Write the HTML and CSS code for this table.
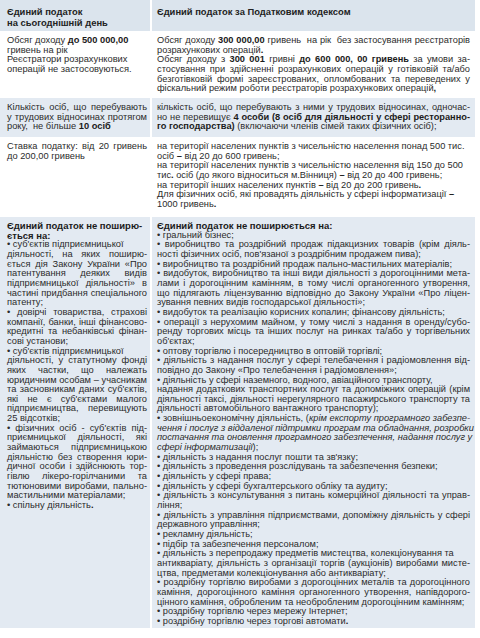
FILE: index.html
```html
<!DOCTYPE html>
<html lang="uk">
<head>
<meta charset="utf-8">
<title>Єдиний податок</title>
<link rel="stylesheet" href="styles.css">
</head>
<body>
<div class="table">
  <div class="cell head left">Єдиний податок<br>на сьогоднішній день</div>
  <div class="cell head right">Єдиний податок за Податковим кодексом</div>

  <div class="cell left">
    <span class="ln">Обсяг доходу <b>до 500 000,00</b></span>
    <span class="ln">гривень на рік</span>
    <span class="ln">Реєстратори розрахункових</span>
    <span class="ln">операцій не застосовуються.</span>
  </div>
  <div class="cell right">
    <span class="ln j">Обсяг доходу <b>300 000,00</b> гривень&nbsp; на рік&nbsp; без застосування реєстраторів</span>
    <span class="ln">розрахункових операцій<b>.</b></span>
    <span class="ln j">Обсяг доходу з <b>300 001</b> гривні <b>до 600 000, 00 гривень</b> за умови за-</span>
    <span class="ln j">стосування при здійсненні розрахункових операцій у готівковій та/або</span>
    <span class="ln j">безготівковій формі зареєстрованих, опломбованих та переведених у</span>
    <span class="ln">фіскальний режим роботи реєстраторів розрахункових операцій<b>,</b></span>
  </div>

  <div class="cell left band">
    <span class="ln j">Кількість осіб, що перебувають</span>
    <span class="ln j">у трудових відносинах протягом</span>
    <span class="ln">року,&nbsp; не більше <b>10 осіб</b></span>
  </div>
  <div class="cell right band">
    <span class="ln j">кількість осіб, що перебувають з ними у трудових відносинах, одночас-</span>
    <span class="ln j">но не перевищує <b>4 особи (8 осіб для діяльності у сфері ресторанно-</b></span>
    <span class="ln"><b>го господарства)</b> (включаючи членів сімей таких фізичних осіб);</span>
  </div>

  <div class="cell left">
    <span class="ln j">Ставка податку: від 20 гривень</span>
    <span class="ln">до 200,00 гривень</span>
  </div>
  <div class="cell right">
    <span class="ln">на території населених пунктів з чисельністю населення понад 500 тис.</span>
    <span class="ln">осіб <b>–</b> від 20 до 600 гривень;</span>
    <span class="ln">на території населених пунктів з чисельністю населення від 150 до 500</span>
    <span class="ln">тис<b>.</b> осіб (до якого відноситься м.Вінниця) <b>–</b> від 20 до 400 гривень;</span>
    <span class="ln">на території інших населених пунктів <b>–</b> від 20 до 200 гривень<b>.</b></span>
    <span class="ln">Для фізичних осіб, які провадять діяльність у сфері інформатизації <b>–</b></span>
    <span class="ln">1000 гривень<b>.</b></span>
  </div>

  <div class="cell left band last">
    <span class="ln sub">Єдиний податок не поширю-</span>
    <span class="ln sub">ється на:</span>
    <span class="ln">• суб'єктів підприємницької</span>
    <span class="ln j">діяльності, на яких поширю-</span>
    <span class="ln j">ється дія Закону України «Про</span>
    <span class="ln j">патентування деяких видів</span>
    <span class="ln j">підприємницької діяльності» в</span>
    <span class="ln j">частині придбання спеціального</span>
    <span class="ln">патенту;</span>
    <span class="ln j">• довірчі товариства, страхові</span>
    <span class="ln j">компанії, банки, інші фінансово-</span>
    <span class="ln j">кредитні та небанківські фінан-</span>
    <span class="ln">сові установи;</span>
    <span class="ln">• суб'єктів підприємницької</span>
    <span class="ln j">діяльності, у статутному фонді</span>
    <span class="ln j">яких частки, що належать</span>
    <span class="ln j">юридичним особам – учасникам</span>
    <span class="ln j">та засновникам даних суб'єктів,</span>
    <span class="ln j">які не є суб'єктами малого</span>
    <span class="ln j">підприємництва, перевищують</span>
    <span class="ln">25 відсотків;</span>
    <span class="ln j">• фізичних осіб - суб'єктів під-</span>
    <span class="ln j">приємницької діяльності, які</span>
    <span class="ln j">займаються підприємницькою</span>
    <span class="ln j">діяльністю без створення юри-</span>
    <span class="ln j">дичної особи і здійснюють тор-</span>
    <span class="ln j">гівлю лікеро-горілчаними та</span>
    <span class="ln j">тютюновими виробами, пально-</span>
    <span class="ln">мастильними матеріалами;</span>
    <span class="ln">• спільну діяльність<b>.</b></span>
  </div>
  <div class="cell right band last">
    <span class="ln sub">Єдиний податок не поширюється на:</span>
    <span class="ln">• гральний бізнес;</span>
    <span class="ln j">• виробництво та роздрібний продаж підакцизних товарів (крім діяль-</span>
    <span class="ln">ності фізичних осіб, пов'язаної з роздрібним продажем пива);</span>
    <span class="ln">• виробництво та роздрібний продаж пально-мастильних матеріалів;</span>
    <span class="ln j">• видобуток, виробництво та інші види діяльності з дорогоцінними мета-</span>
    <span class="ln j">лами і дорогоцінним камінням, в тому числі органогенного утворення,</span>
    <span class="ln j">що підлягають ліцензуванню відповідно до Закону України «Про ліцен-</span>
    <span class="ln">зування певних видів господарської діяльності»;</span>
    <span class="ln">• видобуток та реалізацію корисних копалин; фінансову діяльність;</span>
    <span class="ln j">• операції з нерухомим майном, у тому числі з надання в оренду/субо-</span>
    <span class="ln j">ренду торгових місць та інших послуг на ринках та/або у торгівельних</span>
    <span class="ln">об'єктах;</span>
    <span class="ln">• оптову торгівлю і посередництво в оптовій торгівлі;</span>
    <span class="ln j">• діяльність з надання послуг у сфері телебачення і радіомовлення від-</span>
    <span class="ln">повідно до Закону «Про телебачення і радіомовлення»;</span>
    <span class="ln">• діяльність у сфері наземного, водного, авіаційного транспорту,</span>
    <span class="ln j">надання додаткових транспортних послуг та допоміжних операцій (крім</span>
    <span class="ln j">діяльності таксі, діяльності нерегулярного пасажирського транспорту та</span>
    <span class="ln">діяльності автомобільного вантажного транспорту);</span>
    <span class="ln j">• зовнішньоекономічну діяльність, (<i>крім експорту програмного забезпе-</i></span>
    <span class="ln j"><i>чення і послуг з віддаленої підтримки програм та обладнання, розробки</i></span>
    <span class="ln j"><i>постачання та оновлення програмного забезпечення, надання послуг у</i></span>
    <span class="ln"><i>сфері інформатизації</i>);</span>
    <span class="ln">• діяльність з надання послуг пошти та зв'язку;</span>
    <span class="ln">• діяльність з проведення розслідувань та забезпечення безпеки;</span>
    <span class="ln">• діяльність у сфері права;</span>
    <span class="ln">• діяльність у сфері бухгалтерського обліку та аудиту;</span>
    <span class="ln j">• діяльність з консультування з питань комерційної діяльності та управ-</span>
    <span class="ln">ління;</span>
    <span class="ln j">• діяльність з управління підприємствами, допоміжну діяльність у сфері</span>
    <span class="ln">державного управління;</span>
    <span class="ln">• рекламну діяльність;</span>
    <span class="ln">• підбір та забезпечення персоналом;</span>
    <span class="ln">• діяльність з перепродажу предметів мистецтва, колекціонування та</span>
    <span class="ln j">антикваріату, діяльність з організації торгів (аукціонів) виробами мисте-</span>
    <span class="ln">цтва, предметами колекціонування або антикваріату;</span>
    <span class="ln j">• роздрібну торгівлю виробами з дорогоцінних металів та дорогоцінного</span>
    <span class="ln j">каміння, дорогоцінного каміння органогенного утворення, напівдорого-</span>
    <span class="ln">цінного каміння, обробленим та необробленим дорогоцінним камінням;</span>
    <span class="ln">• роздрібну торгівлю через мережу Інтернет;</span>
    <span class="ln">• роздрібну торгівлю через торгові автомати<b>.</b></span>
  </div>
</div>
</body>
</html>
```
FILE: styles.css
```css
html, body {
  margin: 0;
  padding: 0;
  background: #ffffff;
}

body {
  font-family: "Liberation Sans", Arial, sans-serif;
  color: #2b2b2b;
  font-size: 9.25px;
  line-height: 9.65px;
}

.table {
  display: grid;
  grid-template-columns: 150px 323px;
  grid-template-rows: 31px 67px 39px 80px 411px;
  column-gap: 2px;
  width: 475px;
}

.cell {
  white-space: nowrap;
  padding-top: 5px;
}

.cell b {
  color: #1b1b1b;
}

.left {
  padding-left: 7px;
  padding-right: 3px;
  font-size: 9.3px;
}

.right {
  padding-left: 5px;
  padding-right: 5px;
}

.last {
  padding-top: 4px;
}

.head {
  background: #dbe4ed;
  font-weight: bold;
  font-size: 9.4px;
  line-height: 10.5px;
  padding-top: 7px;
  color: #222222;
}

.band {
  background: #e3eaf2;
}

.ln {
  display: block;
}

.ln.j {
  text-align: justify;
  text-align-last: justify;
}

.sub {
  font-weight: bold;
  font-size: 9.5px;
  color: #1b1b1b;
}
```
